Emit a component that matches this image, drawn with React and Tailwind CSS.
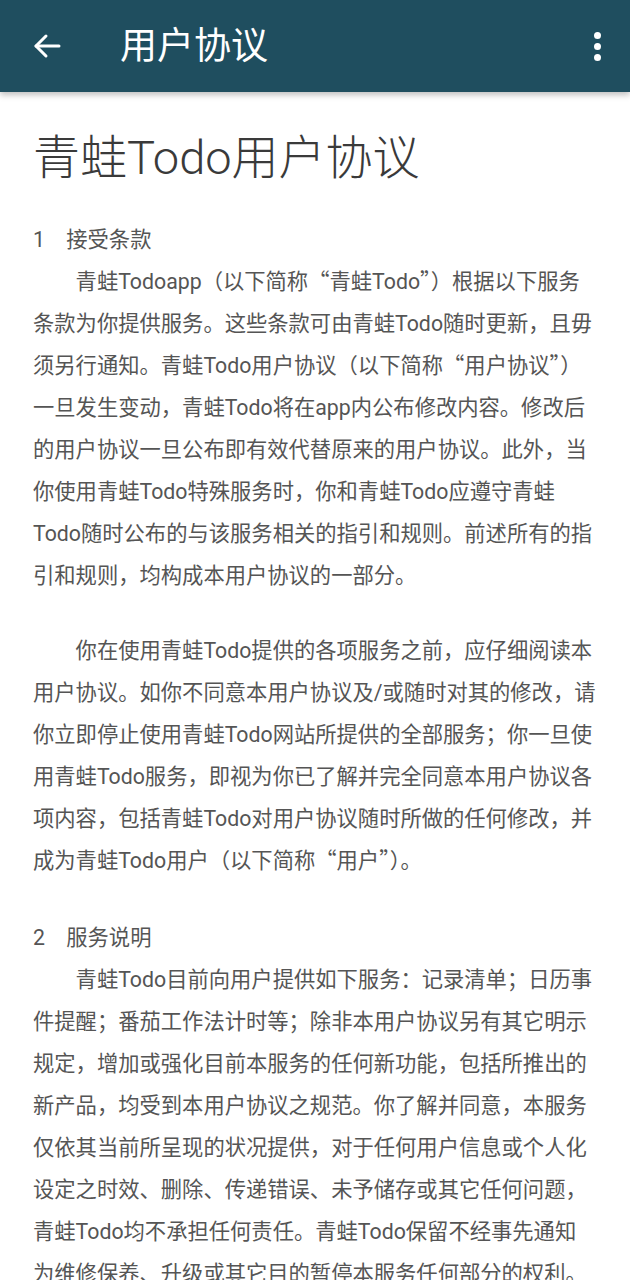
import React from "react";

const font = { fontFamily: 'Roboto, "Noto Sans CJK SC", sans-serif' };
const cjk = { fontFamily: '"Noto Sans CJK SC", sans-serif' };

const sections = [
  {
    heading: "1\u3000接受条款",
    paragraphs: [
      [
        "青蛙Todoapp（以下简称“青蛙Todo”）根据以下服务",
        "条款为你提供服务。这些条款可由青蛙Todo随时更新，且毋",
        "须另行通知。青蛙Todo用户协议（以下简称“用户协议”）",
        "一旦发生变动，青蛙Todo将在app内公布修改内容。修改后",
        "的用户协议一旦公布即有效代替原来的用户协议。此外，当",
        "你使用青蛙Todo特殊服务时，你和青蛙Todo应遵守青蛙",
        "Todo随时公布的与该服务相关的指引和规则。前述所有的指",
        "引和规则，均构成本用户协议的一部分。",
      ],
      [
        "你在使用青蛙Todo提供的各项服务之前，应仔细阅读本",
        "用户协议。如你不同意本用户协议及/或随时对其的修改，请",
        "你立即停止使用青蛙Todo网站所提供的全部服务；你一旦使",
        "用青蛙Todo服务，即视为你已了解并完全同意本用户协议各",
        "项内容，包括青蛙Todo对用户协议随时所做的任何修改，并",
        "成为青蛙Todo用户（以下简称“用户”）。",
      ],
    ],
  },
  {
    heading: "2\u3000服务说明",
    paragraphs: [
      [
        "青蛙Todo目前向用户提供如下服务：记录清单；日历事",
        "件提醒；番茄工作法计时等；除非本用户协议另有其它明示",
        "规定，增加或强化目前本服务的任何新功能，包括所推出的",
        "新产品，均受到本用户协议之规范。你了解并同意，本服务",
        "仅依其当前所呈现的状况提供，对于任何用户信息或个人化",
        "设定之时效、删除、传递错误、未予储存或其它任何问题，",
        "青蛙Todo均不承担任何责任。青蛙Todo保留不经事先通知",
        "为维修保养、升级或其它目的暂停本服务任何部分的权利。",
      ],
    ],
  },
];

// quotes get the CJK face so they come out full width
const withQuotes = (line) =>
  line.split(/([“”])/).map((part, i) =>
    part === "“" || part === "”" ? (
      <span key={i} className="leading-none" style={cjk}>
        {part}
      </span>
    ) : (
      part
    )
  );

const Paragraph = ({ lines, spaced }) => (
  <p
    className={`indent-[2em] whitespace-nowrap ${spaced ? "mt-[33px]" : ""}`}
  >
    {lines.map((line, i) => (
      <React.Fragment key={i}>
        {i > 0 && <br />}
        {withQuotes(line)}
      </React.Fragment>
    ))}
  </p>
);

const App = () => {
  return (
    <div className="min-h-[1280px] bg-white" style={font}>
      <header className="relative z-10 flex h-[92px] items-center bg-[#1f4e5f] px-[33px] shadow-[0_3px_6px_rgba(0,0,0,0.25)]">
        <svg
          width="28"
          height="26"
          viewBox="0 0 28 26"
          fill="none"
          stroke="white"
          strokeWidth="3"
          strokeLinecap="round"
          strokeLinejoin="round"
        >
          <path d="M26 13H3" />
          <path d="M13 3L3 13l10 10" />
        </svg>
        <h1 className="ml-[59px] text-[37px] leading-none text-white">
          用户协议
        </h1>
        <div className="ml-auto mr-[-4px] flex flex-col items-center gap-[4px]">
          <span className="h-[7px] w-[7px] rounded-full bg-white" />
          <span className="h-[7px] w-[7px] rounded-full bg-white" />
          <span className="h-[7px] w-[7px] rounded-full bg-white" />
        </div>
      </header>

      <main className="px-[33px] text-[#555555]">
        <h2 className="mt-[31px] text-[47px] font-light leading-[69px] text-[#3a3a3a]">
          青蛙Todo用户协议
        </h2>
        <div className="mt-[27px] text-[21.3px] leading-[42px]">
          {sections.map((s, si) => (
            <section key={si} className={si > 0 ? "mt-[35px]" : ""}>
              <h3 className="font-normal">{s.heading}</h3>
              {s.paragraphs.map((p, pi) => (
                <Paragraph key={pi} lines={p} spaced={pi > 0} />
              ))}
            </section>
          ))}
        </div>
      </main>
    </div>
  );
};

export default App;
